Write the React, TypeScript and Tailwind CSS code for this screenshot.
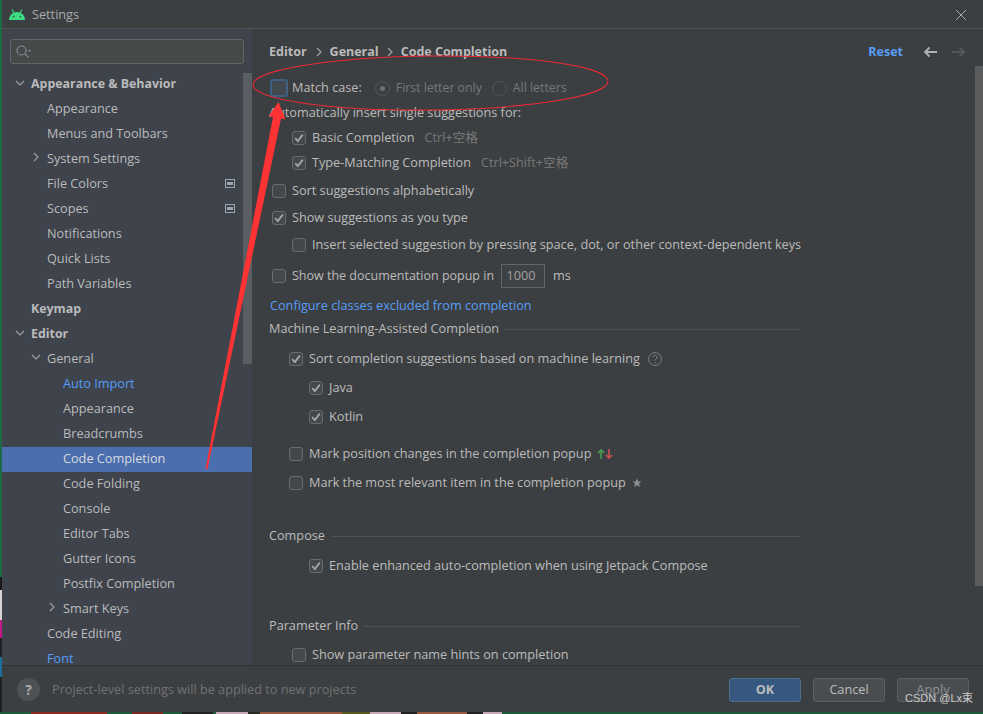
import React from "react";

const FONT = "font-['Open_Sans','Noto_Sans_CJK_SC',sans-serif]";

function Chevron({ open }: { open?: boolean }) {
   return (
      <svg width="10" height="10" viewBox="0 0 10 10" fill="none" stroke="#9da0a3" strokeWidth="1.2">
         {open ? <path d="M1 3l4 4 4-4" /> : <path d="M3 1l4 4-4 4" />}
      </svg>
   );
}

function ProjectIcon() {
   return (
      <svg width="10" height="9" viewBox="0 0 10 9" className="ml-auto mr-[17px]">
         <rect x="0.5" y="0.5" width="9" height="8" fill="none" stroke="#9aa7b0" />
         <rect x="2" y="3" width="6" height="3" fill="#9aa7b0" />
      </svg>
   );
}

type TreeRow = {
   label: string;
   indent: number;
   bold?: boolean;
   chevron?: "open" | "closed";
   link?: boolean;
   selected?: boolean;
   project?: boolean;
};

const tree: TreeRow[] = [
   { label: "Appearance & Behavior", indent: 29, bold: true, chevron: "open" },
   { label: "Appearance", indent: 45 },
   { label: "Menus and Toolbars", indent: 45 },
   { label: "System Settings", indent: 45, chevron: "closed" },
   { label: "File Colors", indent: 45, project: true },
   { label: "Scopes", indent: 45, project: true },
   { label: "Notifications", indent: 45 },
   { label: "Quick Lists", indent: 45 },
   { label: "Path Variables", indent: 45 },
   { label: "Keymap", indent: 29, bold: true },
   { label: "Editor", indent: 29, bold: true, chevron: "open" },
   { label: "General", indent: 45, chevron: "open" },
   { label: "Auto Import", indent: 61, link: true },
   { label: "Appearance", indent: 61 },
   { label: "Breadcrumbs", indent: 61 },
   { label: "Code Completion", indent: 61, selected: true },
   { label: "Code Folding", indent: 61 },
   { label: "Console", indent: 61 },
   { label: "Editor Tabs", indent: 61 },
   { label: "Gutter Icons", indent: 61 },
   { label: "Postfix Completion", indent: 61 },
   { label: "Smart Keys", indent: 61, chevron: "closed" },
   { label: "Code Editing", indent: 45 },
   { label: "Font", indent: 45, link: true },
];

function Sidebar() {
   return (
      <div className="flex h-full w-[250px] shrink-0 flex-col overflow-hidden bg-[#3e434c]">
         {/* search */}
         <div className="px-2 pt-[10px]">
            <div className="flex h-[25px] w-[234px] items-center gap-[1px] rounded-[3px] border border-[#646464] bg-[#45494a] pl-[5px]">
               <svg width="16" height="14" viewBox="0 0 16 14" fill="none" stroke="#8b8e90" strokeWidth="1.1">
                  <circle cx="5.5" cy="5.5" r="4.5" />
                  <path d="M9 9l3.5 3.5" />
                  <path d="M12 5h3l-1.5 2z" fill="#8b8e90" stroke="none" />
               </svg>
            </div>
         </div>
         {/* tree */}
         <div className="relative mt-[8px] flex-1">
            <div className="absolute right-0 top-[1px] h-[291px] w-[9px] bg-[#5a5d62]" />
            {tree.map((row, i) => (
               <div
                  key={i}
                  className={`flex h-[25px] items-center ${row.selected ? "bg-[#4b6eaf]" : ""} ${
                     row.link ? "text-[#589df6]" : row.selected ? "text-[#d8dadc]" : "text-[#bbbbbb]"
                  } ${row.bold ? "text-[12.4px] font-bold" : "pb-[2px] text-[12.7px]"}`}
                  style={{ paddingLeft: row.indent }}
               >
                  <span className="relative">
                     {row.chevron && (
                        <span className="absolute left-[-16px] top-[3px]">
                           <Chevron open={row.chevron === "open"} />
                        </span>
                     )}
                     {row.label}
                  </span>
                  {row.project && <ProjectIcon />}
               </div>
            ))}
         </div>
      </div>
   );
}

function Check({ checked, focus }: { checked?: boolean; focus?: boolean }) {
   return (
      <span
         className={`flex shrink-0 items-center justify-center rounded-[3px] ${
            focus
               ? "h-[18px] w-[18px] border-[2px] border-[#3d6185] bg-[#43494e]"
               : "h-[14px] w-[14px] border border-[#6b6b6b] bg-[#43494a]"
         }`}
      >
         {checked && (
            <svg width="10" height="10" viewBox="0 0 10 10" fill="none" stroke="#a7a7a7" strokeWidth="1.8">
               <path d="M1.2 5.2l2.6 2.8L8.8 1.6" />
            </svg>
         )}
      </span>
   );
}

function Radio({ selected }: { selected?: boolean }) {
   return (
      <span className="flex h-[15px] w-[15px] shrink-0 items-center justify-center rounded-full border border-[#535658]">
         {selected && <span className="h-[5px] w-[5px] rounded-full bg-[#6f7173]" />}
      </span>
   );
}

function Option({
   label,
   left,
   top,
   checked,
   children,
}: {
   label: string;
   left: number;
   top: number;
   checked?: boolean;
   children?: React.ReactNode;
}) {
   return (
      <div className="flex h-[18px] items-center gap-[6px]" style={{ marginLeft: left, marginTop: top }}>
         <Check checked={checked} />
         <span className="whitespace-nowrap">{label}</span>
         {children}
      </div>
   );
}

function Section({ label, top }: { label: string; top: number }) {
   return (
      <div className="flex h-[18px] items-center gap-[6px]" style={{ marginTop: top }}>
         <span className="whitespace-nowrap">{label}</span>
         <span className="h-px flex-1 bg-[#515151]" />
      </div>
   );
}

function Main() {
   return (
      <div className="relative min-w-0 flex-1 bg-[#3c3f41] pl-[17px] text-[12.7px] text-[#bbbbbb]">
         {/* scrollbar */}
         <div className="absolute right-0 top-[37px] h-[520px] w-[8px] bg-[#5a5c5e]" />

         <div className="flex h-[46px] items-center pr-[17px] text-[12.5px] font-bold">
            <span>Editor</span>
            <span className="ml-[7px] mr-[6px]">
               <Chevron />
            </span>
            <span>General</span>
            <span className="ml-[6px] mr-[6px]">
               <Chevron />
            </span>
            <span>Code Completion</span>
            <span className="ml-auto text-[#589df6]">Reset</span>
            <svg width="16" height="12" viewBox="0 0 16 12" className="ml-[20px]" fill="none" stroke="#afb1b3" strokeWidth="1.8">
               <path d="M14 6H2M6.5 1.5L2 6l4.5 4.5" />
            </svg>
            <svg width="16" height="12" viewBox="0 0 16 12" className="ml-[11px]" fill="none" stroke="#5a5c5e" strokeWidth="1.6">
               <path d="M2 6h12M9.5 1.5L14 6l-4.5 4.5" />
            </svg>
         </div>

         <div className="w-[532px]">
            <div className="mt-[4px] flex h-[18px] items-center">
               <span className="ml-[1px] mr-[4px]">
                  <Check focus />
               </span>
               <span>Match case:</span>
               <span className="ml-[13px] flex items-center gap-[6px] text-[12.3px] text-[#787878]">
                  <Radio selected />
                  First letter only
                  <span className="ml-[4px]">
                     <Radio />
                  </span>
                  All letters
               </span>
            </div>
            <div className="mt-[6px] h-[18px] leading-[18px]">Automatically insert single suggestions for:</div>
            <Option label="Basic Completion" left={23} top={8} checked>
               <span className="ml-[4px] text-[#787878]">Ctrl+空格</span>
            </Option>
            <Option label="Type-Matching Completion" left={23} top={7} checked>
               <span className="ml-[4px] text-[#787878]">Ctrl+Shift+空格</span>
            </Option>
            <Option label="Sort suggestions alphabetically" left={3} top={10} />
            <Option label="Show suggestions as you type" left={3} top={9} checked />
            <Option label="Insert selected suggestion by pressing space, dot, or other context-dependent keys" left={23} top={9} />
            <div className="mt-[10px] flex h-[24px] items-center gap-[6px] pl-[3px]">
               <Check />
               <span className="text-[12.5px]">Show the documentation popup in</span>
               <span className="ml-[1px] flex h-[24px] w-[44px] items-center justify-center border border-[#646464] bg-[#3f4244] pr-[4px] text-[#a0a0a0]">
                  1000
               </span>
               <span className="ml-[2px]">ms</span>
            </div>
            <div className="mt-[8px] h-[18px] pl-[1px] leading-[18px] text-[#589df6]">Configure classes excluded from completion</div>
            <Section label="Machine Learning-Assisted Completion" top={6} />
            <Option label="Sort completion suggestions based on machine learning" left={20} top={12} checked>
               <svg width="14" height="14" viewBox="0 0 14 14" className="ml-[2px]" fill="none" stroke="#7c7e80">
                  <circle cx="7" cy="7" r="6.4" />
                  <path d="M5 5.4a2 2 0 1 1 3 1.7c-.7.4-1 .8-1 1.6M7 9.8v1.2" />
               </svg>
            </Option>
            <Option label="Java" left={40} top={11} checked />
            <Option label="Kotlin" left={40} top={11} checked />
            <Option label="Mark position changes in the completion popup" left={20} top={19}>
               <svg width="16" height="12" viewBox="0 0 16 12" fill="none" strokeWidth="1.6">
                  <path d="M4 11V2M1 5l3-3 3 3" stroke="#499c54" />
                  <path d="M12 1v9M9 7l3 3 3-3" stroke="#c75450" />
               </svg>
            </Option>
            <Option label="Mark the most relevant item in the completion popup" left={20} top={11}>
               <svg width="10" height="10" viewBox="0 0 10 10" fill="#8b8e90">
                  <path d="M5 .5l1.3 3h3.2L7 5.6l.9 3.4L5 7.2 2.1 9 3 5.6.5 3.5h3.2z" />
               </svg>
            </Option>
            <Section label="Compose" top={35} />
            <Option label="Enable enhanced auto-completion when using Jetpack Compose" left={40} top={12} checked />
            <Section label="Parameter Info" top={42} />
            <Option label="Show parameter name hints on completion" left={23} top={11} />
         </div>
      </div>
   );
}

function Annotation() {
   return (
      <svg width="983" height="714" viewBox="0 0 983 714" className="pointer-events-none absolute left-0 top-0" fill="none">
         <ellipse cx="430.5" cy="83" rx="177.5" ry="27" stroke="#ee2a35" transform="rotate(-0.6 430.5 83)" />
         <path d="M278.5 102L285.5 119.5L281 118.5L207.5 469L205.5 469L273 117L268.5 116.5Z" fill="#ff3333" />
      </svg>
   );
}

// bits of the desktop wallpaper that show round the window
const leftEdge = [
   { h: 577, c: "bg-[#1c6b45]" },
   { h: 13, c: "bg-[#1a1a1a]" },
   { h: 30, c: "bg-[#d8d4d6]" },
   { h: 18, c: "bg-[#c2188b]" },
   { h: 19, c: "bg-[#222226]" },
   { h: 20, c: "bg-[#1d6f9a]" },
   { h: 37, c: "bg-[#1f1f22]" },
];

const bottomEdge = [
   { w: 31, c: "bg-[#1f5a3a]" },
   { w: 76, c: "bg-[#8c2b22]" },
   { w: 25, c: "bg-[#1f5a3a]" },
   { w: 31, c: "bg-[#7a2a22]" },
   { w: 19, c: "bg-[#1f5a3a]" },
   { w: 31, c: "bg-[#222222]" },
   { w: 3, c: "bg-[#1f5a3a]" },
   { w: 32, c: "bg-[#c9a9b8]" },
   { w: 12, c: "bg-[#2a2a20]" },
   { w: 82, c: "bg-[#9a5a40]" },
   { w: 28, c: "bg-[#5a5a20]" },
   { w: 31, c: "bg-[#c9a9b8]" },
   { w: 16, c: "bg-[#222222]" },
   { w: 50, c: "bg-[#9a5a40]" },
   { w: 16, c: "bg-[#222222]" },
   { w: 19, c: "bg-[#c9a9b8]" },
];

export default function App() {
   return (
      <div className={`relative h-[714px] w-[983px] overflow-hidden bg-[#1f5a3a] ${FONT}`}>
         {/* wallpaper edge */}
         <div className="absolute left-0 top-0 flex w-[2px] flex-col">
            {leftEdge.map((s, i) => (
               <div key={i} className={s.c} style={{ height: s.h }} />
            ))}
         </div>
         <div className="absolute bottom-0 left-0 flex h-[2px] w-full">
            {bottomEdge.map((s, i) => (
               <div key={i} className={s.c} style={{ width: s.w }} />
            ))}
         </div>

         <div className="relative flex h-[712px] flex-col pl-[2px]">
            {/* title bar */}
            <div className="flex h-[29px] shrink-0 items-center border-b border-[#515151] bg-[#3c3f41] pl-[7px] pr-[16px] pt-[1px] text-[12.7px] text-[#a9abad]">
               <svg width="16" height="11" viewBox="0 0 16 11">
                  <path d="M0 11a8 8 0 0 1 16 0z" fill="#3ddc84" />
                  <path d="M3 .5l2 3.5M13 .5l-2 3.5" stroke="#3ddc84" strokeWidth="1.1" />
                  <circle cx="4.6" cy="7.6" r=".8" fill="#3c3f41" />
                  <circle cx="11.4" cy="7.6" r=".8" fill="#3c3f41" />
               </svg>
               <span className="ml-[7px]">Settings</span>
               <svg width="12" height="12" viewBox="0 0 12 12" className="ml-auto" fill="none" stroke="#a9abad">
                  <path d="M1 1l10 10M11 1L1 11" />
               </svg>
            </div>

            {/* body */}
            <div className="flex min-h-0 flex-1">
               <Sidebar />
               <Main />
            </div>

            {/* footer */}
            <div className="flex h-[47px] shrink-0 items-center border-t border-[#323232] bg-[#3c3f41] pl-[15px] pr-[14px] pt-[1px] text-[12.7px]">
               <span className="flex h-[23px] w-[23px] items-center justify-center rounded-full bg-[#4f5254] text-[14px] font-bold text-[#a9abad]">
                  ?
               </span>
               <span className="ml-[12px] text-[#6f7173]">Project-level settings will be applied to new projects</span>
               <button className="ml-auto h-[24px] w-[72px] rounded-[3px] border border-[#4c708c] bg-[#365880] font-bold text-[#bbbbbb]">OK</button>
               <button className="ml-[12px] h-[24px] w-[72px] rounded-[3px] border border-[#5e6060] bg-[#4a4d4f] text-[#bbbbbb]">Cancel</button>
               <button className="ml-[12px] h-[24px] w-[72px] rounded-[3px] border border-[#5e6060] bg-[#4a4d4f] text-[#8f9193]">Apply</button>
            </div>
         </div>

         <Annotation />

         {/* watermark */}
         <span className="absolute left-[905px] top-[691px] font-['Liberation_Sans','Noto_Sans_CJK_SC',sans-serif] text-[11px] leading-[14px] text-[#c8c8c8]">
            CSDN @Lx束
         </span>
      </div>
   );
}
